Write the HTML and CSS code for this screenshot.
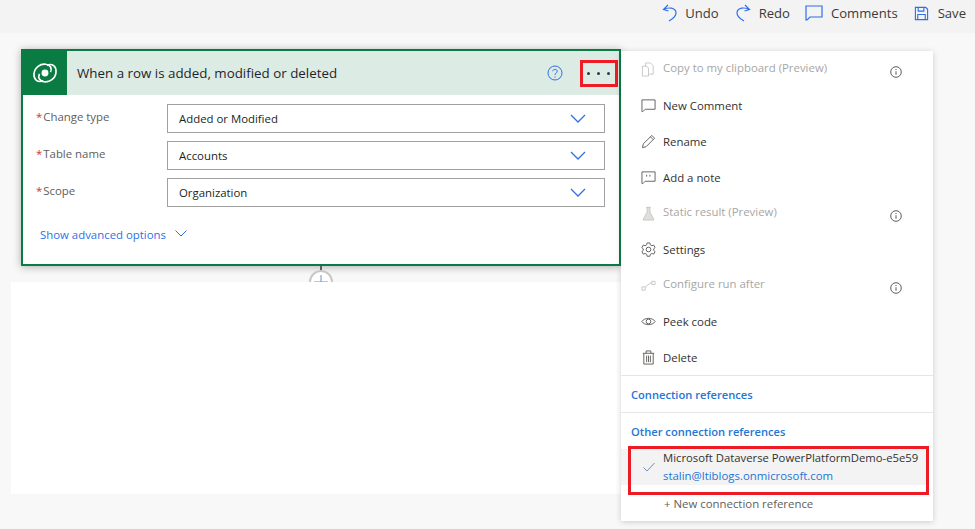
FILE: index.html
```html
<!DOCTYPE html>
<html lang="en">
  <head>
    <meta charset="UTF-8" />
    <title>Flow designer</title>
    <link rel="stylesheet" href="styles.css">
  </head>
  <body>
    <div class="toolbar">
      <div class="tool">
        <svg class="tool-icon" viewBox="0 0 15 18"><path d="M6 1 1.500 5.500l5 1.500M2 5.500C6 3 13.500 3.500 14 8.500 14.300 12 10.500 15 7 17" /></svg>
        Undo
      </div>
      <div class="tool">
        <svg class="tool-icon" viewBox="0 0 15 18"><path d="M9 1l4.500 4.500-5 1.500M13 5.500C9 3 1.500 3.500 1 8.500 .7 12 4.500 15 8 17" /></svg>
        Redo
      </div>
      <div class="tool comments">
        <svg class="tool-icon wide" viewBox="0 0 18 16"><path d="M1 1h16v11H5l-3 3h-1z" /></svg>
        Comments
      </div>
      <div class="tool save-tool">
        <svg class="tool-icon save" viewBox="0 0 16 16"><path d="M1.500 1.500h11l2 2v11h-13zM4.500 1.500v4h6v-4M4 14.500v-5.500h8v5.500" /></svg>
        Save
      </div>
    </div>

    <div class="canvas">
      <div class="flow">
        <div class="card">
          <div class="card-head">
            <div class="card-logo">
              <svg viewBox="0 0 28 24">
                <path d="M12 20.500C6 23 1.500 19 2 13 2.500 6 9 1.500 15 2.500 20 3 22 7 20 11" />
                <path d="M16 3.500C22 1 26.500 5 26 11 25.500 18 19 22.500 13 21.500 8 21 6 17 8 13" />
                <circle class="dot" cx="14" cy="12" r="3.800" />
              </svg>
            </div>
            <div class="card-title">When a row is added, modified or deleted</div>
            <svg class="help" viewBox="0 0 16 16"><circle cx="8" cy="8" r="7" /><path d="M5.800 6.200C6 3.800 10.200 3.800 10.200 6.200 10.200 8 8 8 8 10" /><path d="M8 11.500v1.200" /></svg>
            <div class="more"><span></span><span></span><span></span></div>
          </div>
          <div class="card-body">
            <div class="field">
              <div class="field-label"><span class="req">*</span>Change type</div>
              <div class="select">Added or Modified
                <svg class="chev" viewBox="0 0 16 10"><path d="M1 1l7 7 7-7" /></svg>
              </div>
            </div>
            <div class="field">
              <div class="field-label"><span class="req">*</span>Table name</div>
              <div class="select">Accounts
                <svg class="chev" viewBox="0 0 16 10"><path d="M1 1l7 7 7-7" /></svg>
              </div>
            </div>
            <div class="field">
              <div class="field-label"><span class="req">*</span>Scope</div>
              <div class="select">Organization
                <svg class="chev" viewBox="0 0 16 10"><path d="M1 1l7 7 7-7" /></svg>
              </div>
            </div>
            <div class="advanced">Show advanced options
              <svg class="adv-chev" viewBox="0 0 12 7"><path d="M.5.500 6 6l5.500-5.500" /></svg>
            </div>
          </div>
        </div>
        <div class="connector">
          <div class="line"></div>
          <svg class="plus" viewBox="0 0 24 24"><circle cx="12" cy="12" r="11" /><path class="cross" d="M12 5v14M5 12h14" /></svg>
        </div>
        <div class="blank"></div>
      </div>

      <div class="menu">
        <div class="item off">
          <svg class="item-icon" viewBox="0 0 16 16"><path d="M5 4.500V1h5l3 3v9H9M1.500 4.500H6l2 2v8.500H1.500z" /></svg>
          <span class="item-text">Copy to my clipboard (Preview)</span>
          <svg class="info" viewBox="0 0 12 12"><circle cx="6" cy="6" r="5.300" /><path d="M6 5.200v3.600M6 3v1.100" /></svg>
        </div>
        <div class="item">
          <svg class="item-icon" viewBox="0 0 16 16"><path d="M1 2h14v10H4.500L2 14.500H1z" /></svg>
          <span class="item-text">New Comment</span>
        </div>
        <div class="item">
          <svg class="item-icon" viewBox="0 0 16 16"><path d="M1.500 14.500l1-4L11.500 1.500l3 3-9 9zM10 3l3 3" /></svg>
          <span class="item-text">Rename</span>
        </div>
        <div class="item">
          <svg class="item-icon" viewBox="0 0 16 16"><path d="M1 2h14v10H4.500L2 14.500H1zM6 5v2M9.500 5v2" /></svg>
          <span class="item-text">Add a note</span>
        </div>
        <div class="item off">
          <svg class="item-icon" viewBox="0 0 16 16"><path class="flask" d="M5.500 1.500h5M6.500 1.500v5L2.500 14v1h11v-1l-4-7.500v-5z" /></svg>
          <span class="item-text">Static result (Preview)</span>
          <svg class="info" viewBox="0 0 12 12"><circle cx="6" cy="6" r="5.300" /><path d="M6 5.200v3.600M6 3v1.100" /></svg>
        </div>
        <div class="item">
          <svg class="item-icon" viewBox="0 0 16 16"><circle cx="8" cy="8" r="2.500" /><path d="M6.500 1h3l.4 2 1.700 1 2-.7 1.400 2.700-1.500 1.300v1.600l1.500 1.300-1.400 2.700-2-.7-1.700 1-.4 2h-3l-.4-2-1.700-1-2 .7L.9 10.200l1.500-1.300V7.300L.9 6l1.400-2.700 2 .7 1.700-1z" /></svg>
          <span class="item-text">Settings</span>
        </div>
        <div class="item off">
          <svg class="item-icon" viewBox="0 0 16 16"><path d="M1 9.500h3.500V13H1zM11.500 3.500H15V7h-3.500zM4.500 9.500l7-5" /></svg>
          <span class="item-text">Configure run after</span>
          <svg class="info" viewBox="0 0 12 12"><circle cx="6" cy="6" r="5.300" /><path d="M6 5.200v3.600M6 3v1.100" /></svg>
        </div>
        <div class="item">
          <svg class="item-icon" viewBox="0 0 16 16"><path d="M.8 8C4 3.500 12 3.500 15.200 8 12 12.500 4 12.500.8 8z" /><circle cx="8" cy="8" r="2.500" /></svg>
          <span class="item-text">Peek code</span>
        </div>
        <div class="item">
          <svg class="item-icon" viewBox="0 0 16 16"><path d="M2 3.500h12M3 3.500V15h10V3.500M5.500 3.500V1h5v2.500M6 6v7M8 6v7M10 6v7" /></svg>
          <span class="item-text">Delete</span>
        </div>
        <div class="section">Connection references</div>
        <div class="section">Other connection references</div>
        <div class="conn">
          <svg class="check" viewBox="0 0 12 10"><path d="M.5 5.500 4 9l7.500-8" /></svg>
          <div>
            <div class="conn-name">Microsoft Dataverse PowerPlatformDemo-e5e59</div>
            <div class="conn-mail">stalin@ltiblogs.onmicrosoft.com</div>
          </div>
        </div>
        <div class="new-conn">+ New connection reference</div>
        <div class="mark"></div>
      </div>
    </div>
  </body>
</html>
```

FILE: styles.css
```css
html,
body {
  margin: 0;
  height: 529px;
  overflow: hidden;
}
body {
  background-color: #f8f8f8;
  color: #323130;
  font-family: "Open Sans", "Liberation Sans", sans-serif;
  font-size: 11.4px;
}
svg {
  fill: none;
  stroke: currentColor;
  stroke-width: 1;
}

.toolbar {
  height: 33px;
  box-sizing: border-box;
  padding: 0 9px 7px 0;
  background-color: #f3f3f3;
  display: flex;
  justify-content: flex-end;
  align-items: center;
}
.tool {
  display: flex;
  align-items: center;
  margin-left: 17px;
  font-size: 13.100px;
  color: #3b3a39;
}
.tool.comments {
  margin-left: 15px;
}
.tool.save-tool {
  margin-left: 16px;
}
.tool-icon {
  width: 15px;
  height: 18px;
  margin-right: 8px;
  color: #2f6fe8;
  stroke-width: 1.200;
}
.tool-icon.wide {
  width: 18px;
  height: 16px;
}
.tool-icon.save {
  width: 15px;
  height: 15px;
  margin-right: 9px;
}

.canvas {
  display: flex;
  align-items: flex-start;
  padding-top: 16px;
  padding-left: 21px;
}
.flow {
  width: 600px;
}
.card {
  height: 217px;
  box-sizing: border-box;
  border: 2px solid #0a7c43;
  background-color: #fff;
  box-shadow: 0 1px 8px rgba(0, 0, 0, 0.3);
}
.card-head {
  height: 44px;
  background-color: #dcebe3;
  display: flex;
  align-items: center;
}
.card-logo {
  width: 44px;
  height: 44px;
  background-color: #0a7c43;
  display: flex;
  align-items: center;
  justify-content: center;
}
.card-logo svg {
  width: 26px;
  height: 22px;
  color: #fff;
  stroke-width: 1.800;
}
.card-logo .dot {
  fill: #fff;
  stroke: none;
}
.card-title {
  flex: 1;
  margin-left: 10px;
  font-size: 13.350px;
  color: #1f1f2e;
}
.help {
  width: 16px;
  height: 16px;
  color: #2f6fe8;
}
.more {
  width: 30px;
  height: 21px;
  margin: 0 1px 0 17px;
  padding-right: 2px;
  border: 3px solid #ed1c24;
  display: flex;
  align-items: center;
  justify-content: center;
  gap: 7px;
}
.more span {
  width: 3px;
  height: 3px;
  border-radius: 50%;
  background-color: #2b3a55;
}

.card-body {
  padding: 9px 14px 0 13px;
}
.field {
  display: flex;
  margin-bottom: 8px;
}
.field-label {
  width: 131px;
  padding-top: 4px;
  color: #605e5c;
  line-height: 18px;
}
.req {
  color: #d13438;
  margin-right: 1px;
}
.select {
  flex: 1;
  height: 29px;
  box-sizing: border-box;
  border: 1px solid #a0a0a0;
  padding-left: 11px;
  line-height: 27px;
  display: flex;
  align-items: center;
  justify-content: space-between;
  color: #201f1e;
}
.chev {
  width: 16px;
  height: 10px;
  margin-right: 18px;
  color: #2f6fe8;
  stroke-width: 1.300;
}
.advanced {
  margin: 20px 0 0 4px;
  color: #2f6fe8;
  display: flex;
  align-items: center;
}
.adv-chev {
  width: 12px;
  height: 7px;
  margin-left: 9px;
  margin-bottom: 3px;
}

.connector {
  height: 16px;
  overflow: hidden;
}
.line {
  width: 2px;
  height: 4px;
  margin-left: 299px;
  background-color: #605e5c;
}
.plus {
  display: block;
  width: 24px;
  height: 24px;
  margin-left: 288px;
  color: #c8c8c8;
  stroke-width: 2;
}
.plus circle {
  fill: #fff;
}
.plus .cross {
  stroke: #6d8fd0;
  stroke-width: 1;
}
.blank {
  height: 212px;
  margin-left: -10px;
  background-color: #fff;
}

.menu {
  width: 312px;
  height: 470px;
  margin-top: 2px;
  background-color: #fff;
  box-shadow: 0 1px 6px rgba(0, 0, 0, 0.18);
  position: relative;
}
.item {
  height: 36px;
  display: flex;
  align-items: center;
  padding-left: 20px;
  position: relative;
}
.item-icon {
  width: 15px;
  height: 15px;
  margin-right: 7px;
  color: #605e5c;
}
.item-text {
  white-space: nowrap;
}
.item.off {
  color: #a8a6a4;
}
.item.off .item-icon {
  color: #c8c6c4;
}
.item.off .item-text {
  position: relative;
  top: -2px;
}
.item.off .flask {
  fill: #e1dfdd;
}
.info {
  position: absolute;
  left: 269px;
  top: 15px;
  width: 12px;
  height: 12px;
  color: #605e5c;
}
.section {
  height: 37px;
  box-sizing: border-box;
  border-top: 1px solid #e6e6e6;
  padding-left: 10px;
  line-height: 37px;
  font-size: 11.150px;
  color: #2475d6;
  font-weight: 600;
}
.conn {
  height: 36px;
  margin-right: 7px;
  background-color: #f3f3f3;
  display: flex;
  align-items: center;
  padding-left: 22px;
  line-height: 18px;
  white-space: nowrap;
}
.check {
  width: 12px;
  height: 10px;
  margin-right: 8px;
  flex: none;
  color: #6d8fc0;
}
.conn-name {
  font-size: 11.300px;
}
.conn-mail {
  color: #2475d6;
}
.new-conn {
  padding-left: 43px;
  margin-top: 11px;
  color: #605e5c;
}
.mark {
  position: absolute;
  left: 7px;
  top: 395px;
  width: 295px;
  height: 43px;
  border: 3px solid #ed1c24;
}
```
